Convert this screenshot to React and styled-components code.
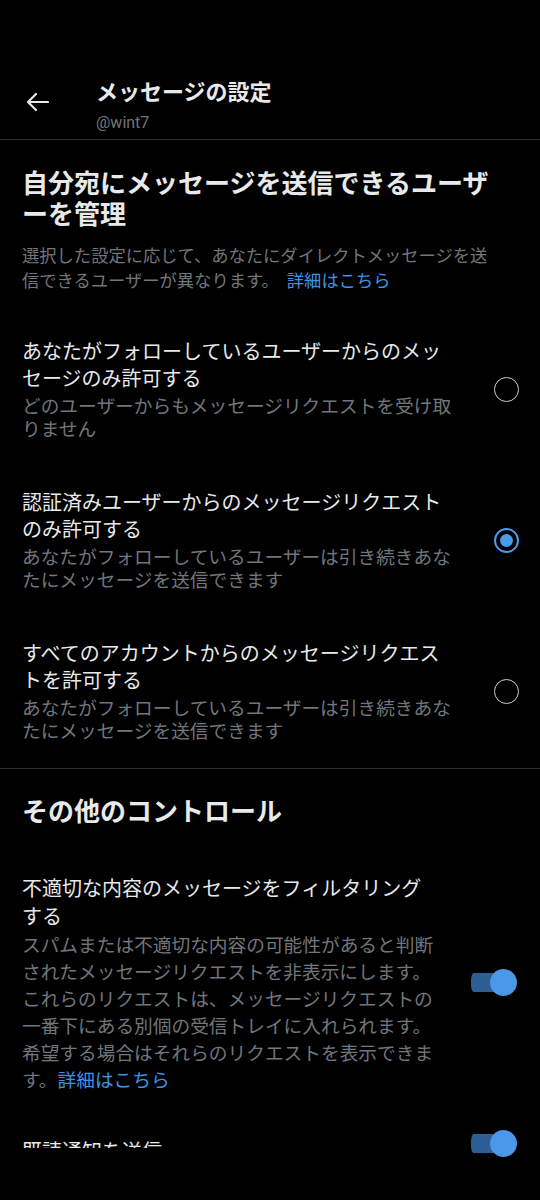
import React from "react";
import styled, { createGlobalStyle } from "styled-components";

const Global = createGlobalStyle`
  html, body { margin: 0; padding: 0; background: #000; }
  body {
    font-family: Roboto, "Noto Sans CJK JP", sans-serif;
    color: #e7e9ea;
    -webkit-font-smoothing: antialiased;
  }
`;

const Page = styled.div`
  width: 540px;
  min-height: 1200px;
  background: #000;
  overflow: hidden;
`;

const Header = styled.header`
  display: flex;
  align-items: flex-start;
  padding: 79px 0 4px;
  border-bottom: 1px solid #2a2d30;
`;

const BackButton = styled.div`
  width: 96px;
  flex: none;
  padding: 13px 0 0 26px;
  box-sizing: border-box;
  display: flex;
`;

const HeaderText = styled.div`
  display: flex;
  flex-direction: column;
`;

const HeaderTitle = styled.div`
  font-size: 22px;
  line-height: 28px;
  font-weight: 700;
  color: #e7e9ea;
`;

const Handle = styled.div`
  margin-top: 4px;
  font-size: 16px;
  line-height: 24px;
  color: #71767b;
`;

const Section = styled.section`
  padding: ${(p) => p.$pt}px 0 ${(p) => p.$pb}px;
  border-bottom: ${(p) => (p.$divider ? "1px solid #2a2d30" : "none")};
`;

const Heading = styled.h2`
  margin: 0 0 ${(p) => p.$mb || 0}px;
  padding: 0 22px;
  max-width: 490px;
  font-size: 26px;
  line-height: 31px;
  font-weight: 700;
  color: #e7e9ea;
`;

const Description = styled.p`
  margin: 13px 0 ${(p) => p.$mb || 0}px;
  padding: 0 22px;
  max-width: 476px;
  font-size: 17.3px;
  line-height: 25px;
  color: #71767b;
`;

const Link = styled.span`
  margin-left: ${(p) => p.$gap || 0}px;
  color: #3b94e8;
`;

const Row = styled.div`
  display: flex;
  align-items: center;
  justify-content: space-between;
  padding: ${(p) => p.$py}px 22px;
`;

const RowText = styled.div`
  width: ${(p) => p.$w}px;
  flex: none;
`;

const RowTitle = styled.div`
  font-size: 20px;
  line-height: ${(p) => p.$lh || 27}px;
  color: #e7e9ea;
`;

const RowSub = styled.div`
  margin-top: ${(p) => p.$mt}px;
  font-size: 18.7px;
  line-height: ${(p) => p.$lh}px;
  color: #71767b;
`;

const Radio = styled.div`
  width: 25px;
  height: 25px;
  flex: none;
  box-sizing: border-box;
  border-radius: 50%;
  border: ${(p) => (p.$checked ? "2.7px solid #4a9be8" : "1.5px solid #c9cdd0")};
  display: flex;
  align-items: center;
  justify-content: center;
  margin: 0 -1px 2px 0;
`;

const RadioDot = styled.div`
  width: 13px;
  height: 13px;
  border-radius: 50%;
  background: #4a9be8;
`;

const Toggle = styled.div`
  width: 46px;
  height: 27px;
  flex: none;
  display: flex;
  align-items: center;
  justify-content: flex-end;
  margin: 0 1px ${(p) => p.$lift || 0}px 0;
  background: linear-gradient(#2e5f94, #2e5f94) left center / 36px 19px no-repeat;
  border-radius: 10px;
`;

const Thumb = styled.div`
  width: 27px;
  height: 27px;
  border-radius: 50%;
  background: #4b98e8;
`;

const LastRow = styled.div`
  display: flex;
  align-items: flex-start;
  justify-content: space-between;
  padding: 11px 22px 0;
`;

const ClippedLabel = styled.div`
  margin-top: 8px;
  height: 10px;
  overflow: hidden;
  font-size: 20px;
  line-height: 28px;
  color: #e7e9ea;
`;

function BackArrow() {
  return (
    <svg width="23" height="20" viewBox="0 0 23 20" fill="none">
      <path
        d="M22 10H2.5M10 2L2 10l8 8"
        stroke="#e7e9ea"
        strokeWidth="2.2"
        strokeLinecap="round"
        strokeLinejoin="round"
      />
    </svg>
  );
}

const options = [
  {
    title: "あなたがフォローしているユーザーからのメッセージのみ許可する",
    sub: "どのユーザーからもメッセージリクエストを受け取りません",
    checked: false,
  },
  {
    title: "認証済みユーザーからのメッセージリクエストのみ許可する",
    sub: "あなたがフォローしているユーザーは引き続きあなたにメッセージを送信できます",
    checked: true,
  },
  {
    title: "すべてのアカウントからのメッセージリクエストを許可する",
    sub: "あなたがフォローしているユーザーは引き続きあなたにメッセージを送信できます",
    checked: false,
  },
];

export default function App() {
  return (
    <Page>
      <Global />
      <Header>
        <BackButton>
          <BackArrow />
        </BackButton>
        <HeaderText>
          <HeaderTitle>メッセージの設定</HeaderTitle>
          <Handle>@wint7</Handle>
        </HeaderText>
      </Header>

      <Section $pt={29} $pb={0} $divider>
        <Heading>自分宛にメッセージを送信できるユーザーを管理</Heading>
        <Description $mb={21}>
          選択した設定に応じて、あなたにダイレクトメッセージを送信できるユーザーが異なります。
          <Link $gap={8}>詳細はこちら</Link>
        </Description>
        {options.map((o, i) => (
          <Row key={i} $py={24}>
            <RowText $w={434}>
              <RowTitle>{o.title}</RowTitle>
              <RowSub $mt={3} $lh={23}>
                {o.sub}
              </RowSub>
            </RowText>
            <Radio $checked={o.checked}>{o.checked && <RadioDot />}</Radio>
          </Row>
        ))}
      </Section>

      <Section $pt={28} $pb={0}>
        <Heading $mb={23}>その他のコントロール</Heading>
        <Row $py={24}>
          <RowText $w={416}>
            <RowTitle $lh={28}>不適切な内容のメッセージをフィルタリングする</RowTitle>
            <RowSub $mt={2} $lh={27}>
              スパムまたは不適切な内容の可能性があると判断されたメッセージリクエストを非表示にします。これらのリクエストは、メッセージリクエストの一番下にある別個の受信トレイに入れられます。希望する場合はそれらのリクエストを表示できます。
              <Link>詳細はこちら</Link>
            </RowSub>
          </RowText>
          <Toggle $lift={6}>
            <Thumb />
          </Toggle>
        </Row>
        <LastRow>
          <ClippedLabel>既読通知を送信</ClippedLabel>
          <Toggle>
            <Thumb />
          </Toggle>
        </LastRow>
      </Section>
    </Page>
  );
}
